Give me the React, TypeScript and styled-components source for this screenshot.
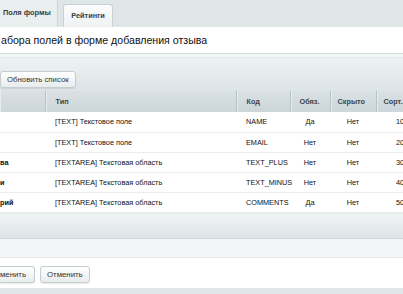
import styled, { createGlobalStyle } from "styled-components";

const GlobalStyle = createGlobalStyle`
  html, body {
    margin: 0;
    padding: 0;
    background: #ffffff;
    overflow: hidden;
  }
  body {
    font-family: "Liberation Sans", Arial, sans-serif;
    color: #222;
  }
  * {
    box-sizing: border-box;
  }
`;

const Page = styled.div`
  width: 403px;
  height: 294px;
  overflow: hidden;
  display: flex;
  flex-direction: column;
`;

const TabBar = styled.div`
  height: 27px;
  flex: none;
  display: flex;
  align-items: flex-end;
  gap: 5px;
  background: #dfe6e8;
`;

const Tab = styled.div<{ $active?: boolean }>`
  height: ${(p) => (p.$active ? "27px" : "23px")};
  display: flex;
  align-items: center;
  font-size: 7.4px;
  font-weight: bold;
  color: #3a3f42;
  ${(p) =>
    p.$active
      ? `
    width: 58px;
    padding: 0 0 2px 3px;
    background: #e9eeef;
    border-right: 1px solid #cdd5d8;
  `
      : `
    width: 50px;
    justify-content: center;
    padding-bottom: 1px;
    background: linear-gradient(#fbfcfc, #eff2f3);
    border: 1px solid #c9d1d4;
    border-bottom: none;
    border-radius: 3px 3px 0 0;
  `}
`;

const Title = styled.div`
  height: 27px;
  flex: none;
  display: flex;
  align-items: center;
  padding: 0 0 1px 1px;
  background: #ffffff;
  border-bottom: 1px solid #d6dde0;
  font-size: 10.6px;
  color: #111;
`;

const Strip = styled.div<{ $h: number }>`
  height: ${(p) => p.$h}px;
  flex: none;
  background: #f3f6f7;
  border-bottom: 1px solid #e3e8ea;
`;

const Toolbar = styled.div`
  height: 33px;
  flex: none;
  display: flex;
  align-items: flex-end;
  padding: 0 0 3px 0;
  background: linear-gradient(#eef2f3, #dce4e7);
`;

const Button = styled.button<{ $cut?: boolean }>`
  height: 17px;
  display: flex;
  align-items: center;
  padding: ${(p) => (p.$cut ? "0 8px 0 0" : "0 6px")};
  font-family: "Liberation Sans", Arial, sans-serif;
  font-size: 7.8px;
  color: #333;
  background: linear-gradient(#ffffff, #e8eced);
  border: 1px solid #c6cdd1;
  ${(p) => (p.$cut ? "border-left: none;" : "")}
  border-radius: ${(p) => (p.$cut ? "0 3px 3px 0" : "3px")};
  box-shadow: 0 1px 1px rgba(0, 0, 0, 0.08);
`;

const TableWrap = styled.div`
  flex: none;
  overflow: hidden;
  width: 403px;
`;

const Table = styled.table`
  width: 440px;
  table-layout: fixed;
  border-collapse: collapse;
  font-size: 7.3px;
`;

const HeadCell = styled.th<{ $align?: string; $pad?: number }>`
  height: 21px;
  padding: 0 0 0 ${(p) => p.$pad ?? 10}px;
  text-align: ${(p) => p.$align ?? "left"};
  font-weight: bold;
  color: #3b474e;
  white-space: nowrap;
  background: linear-gradient(#dae1e4, #ccd5d9);
  border-right: 1px solid #b7c1c5;
  box-shadow: inset 1px 0 0 #e6ebed;
`;

const Row = styled.tr`
  height: 20px;
  border-bottom: 1px solid #e9edef;
  background: #ffffff;
`;

const Cell = styled.td<{ $align?: string; $pad?: number; $bold?: boolean }>`
  padding: 0 0 0 ${(p) => p.$pad ?? 10}px;
  text-align: ${(p) => p.$align ?? "left"};
  font-weight: ${(p) => (p.$bold ? "bold" : "normal")};
  color: #111;
  white-space: nowrap;
`;

const FooterBar = styled.div`
  height: 26px;
  flex: none;
  background: linear-gradient(#f1f4f5, #dde5e8);
  border-top: 1px solid #e6ebed;
  border-bottom: 1px solid #cdd5d8;
`;

const ButtonRow = styled.div`
  height: 30px;
  flex: none;
  display: flex;
  gap: 5px;
  padding-top: 8px;
  background: #ffffff;
`;

const BottomBar = styled.div`
  flex: 1;
  background: #dfe6e8;
`;

const rows = [
  { name: "", type: "[TEXT] Текстовое поле", code: "NAME", req: "Да", hidden: "Нет", sort: "10" },
  { name: "", type: "[TEXT] Текстовое поле", code: "EMAIL", req: "Нет", hidden: "Нет", sort: "20" },
  { name: "ва", type: "[TEXTAREA] Текстовая область", code: "TEXT_PLUS", req: "Нет", hidden: "Нет", sort: "30" },
  { name: "и", type: "[TEXTAREA] Текстовая область", code: "TEXT_MINUS", req: "Нет", hidden: "Нет", sort: "40" },
  { name: "рий", type: "[TEXTAREA] Текстовая область", code: "COMMENTS", req: "Да", hidden: "Нет", sort: "50" },
];

function App() {
  return (
    <>
      <GlobalStyle />
      <Page>
        <TabBar>
          <Tab $active>Поля формы</Tab>
          <Tab>Рейтинги</Tab>
        </TabBar>
        <Title>абора полей в форме добавления отзыва</Title>
        <Strip $h={4} />
        <Toolbar>
          <Button>Обновить список</Button>
        </Toolbar>
        <TableWrap>
          <Table>
            <colgroup>
              <col style={{ width: 45 }} />
              <col style={{ width: 191 }} />
              <col style={{ width: 54 }} />
              <col style={{ width: 40 }} />
              <col style={{ width: 46 }} />
              <col style={{ width: 64 }} />
            </colgroup>
            <thead>
              <tr>
                <HeadCell $pad={0}></HeadCell>
                <HeadCell>Тип</HeadCell>
                <HeadCell>Код</HeadCell>
                <HeadCell $pad={9}>Обяз.</HeadCell>
                <HeadCell $pad={7}>Скрыто</HeadCell>
                <HeadCell $pad={7}>Сорт.</HeadCell>
              </tr>
            </thead>
            <tbody>
              {rows.map((r) => (
                <Row key={r.code}>
                  <Cell $pad={0} $bold>
                    {r.name}
                  </Cell>
                  <Cell>{r.type}</Cell>
                  <Cell>{r.code}</Cell>
                  <Cell $align="center" $pad={0}>
                    {r.req}
                  </Cell>
                  <Cell $align="center" $pad={0}>
                    {r.hidden}
                  </Cell>
                  <Cell $pad={20}>{r.sort}</Cell>
                </Row>
              ))}
            </tbody>
          </Table>
        </TableWrap>
        <FooterBar />
        <Strip $h={19} />
        <ButtonRow>
          <Button $cut>менить</Button>
          <Button>Отменить</Button>
        </ButtonRow>
        <BottomBar />
      </Page>
    </>
  );
}

export default App;
